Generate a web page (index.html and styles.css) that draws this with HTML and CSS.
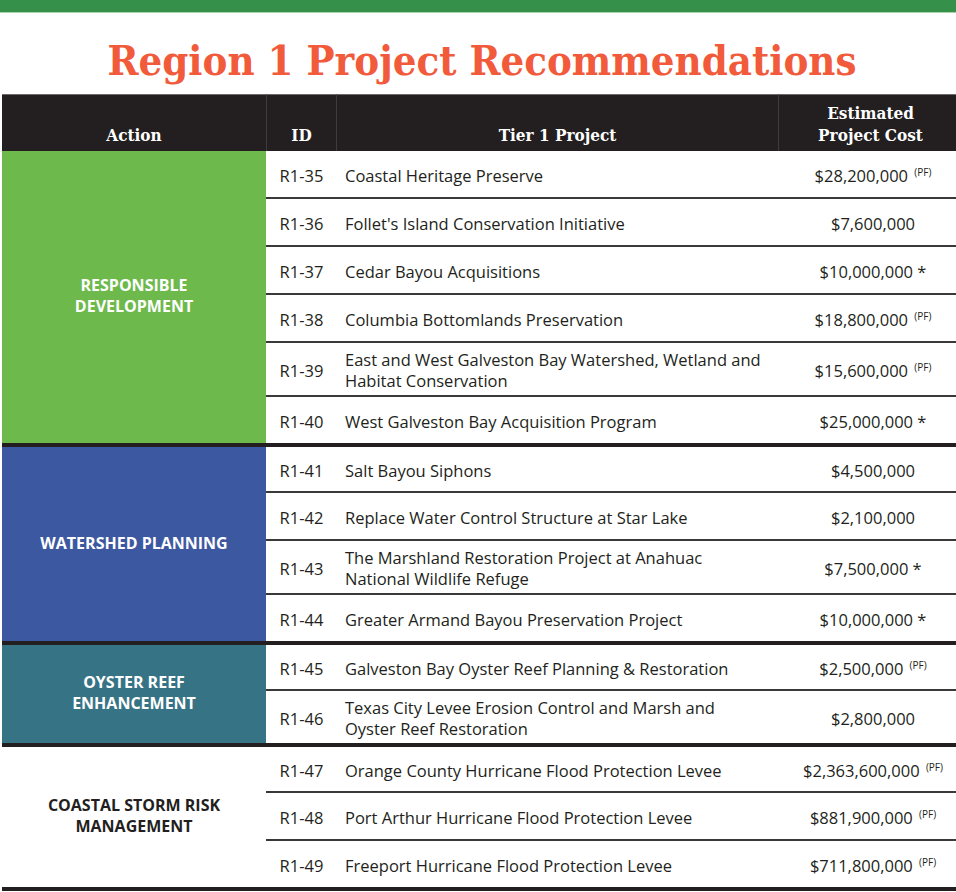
FILE: index.html
```html
<!DOCTYPE html>
<html lang="en">
<head>
<meta charset="utf-8">
<title>Region 1 Project Recommendations</title>
<link rel="stylesheet" href="styles.css">
</head>
<body>
<div class="topbar"></div>
<h1 class="title">Region 1 Project Recommendations</h1>
<table class="projects">
  <colgroup>
    <col class="c-action">
    <col class="c-id">
    <col class="c-proj">
    <col class="c-cost">
  </colgroup>
  <thead>
    <tr>
      <th>Action</th>
      <th>ID</th>
      <th>Tier 1 Project</th>
      <th>Estimated<br>Project Cost</th>
    </tr>
  </thead>
  <tbody class="g-first">
    <tr class="first">
      <td class="action green" rowspan="6">RESPONSIBLE<br>DEVELOPMENT</td>
      <td class="id">R1-35</td><td class="proj">Coastal Heritage Preserve</td><td class="cost">$28,200,000 <sup>(PF)</sup></td>
    </tr>
    <tr><td class="id">R1-36</td><td class="proj">Follet's Island Conservation Initiative</td><td class="cost">$7,600,000</td></tr>
    <tr><td class="id">R1-37</td><td class="proj">Cedar Bayou Acquisitions</td><td class="cost">$10,000,000 *</td></tr>
    <tr><td class="id">R1-38</td><td class="proj">Columbia Bottomlands Preservation</td><td class="cost">$18,800,000 <sup>(PF)</sup></td></tr>
    <tr class="double"><td class="id">R1-39</td><td class="proj">East and West Galveston Bay Watershed, Wetland and<br>Habitat Conservation</td><td class="cost">$15,600,000 <sup>(PF)</sup></td></tr>
    <tr><td class="id">R1-40</td><td class="proj">West Galveston Bay Acquisition Program</td><td class="cost">$25,000,000 *</td></tr>
  </tbody>
  <tbody class="group">
    <tr class="first">
      <td class="action blue" rowspan="4">WATERSHED PLANNING</td>
      <td class="id">R1-41</td><td class="proj">Salt Bayou Siphons</td><td class="cost">$4,500,000</td>
    </tr>
    <tr><td class="id">R1-42</td><td class="proj">Replace Water Control Structure at Star Lake</td><td class="cost">$2,100,000</td></tr>
    <tr class="double"><td class="id">R1-43</td><td class="proj">The Marshland Restoration Project at Anahuac<br>National Wildlife Refuge</td><td class="cost">$7,500,000 *</td></tr>
    <tr><td class="id">R1-44</td><td class="proj">Greater Armand Bayou Preservation Project</td><td class="cost">$10,000,000 *</td></tr>
  </tbody>
  <tbody class="group">
    <tr class="first">
      <td class="action teal" rowspan="2">OYSTER REEF<br>ENHANCEMENT</td>
      <td class="id">R1-45</td><td class="proj">Galveston Bay Oyster Reef Planning &amp; Restoration</td><td class="cost">$2,500,000 <sup>(PF)</sup></td>
    </tr>
    <tr class="double"><td class="id">R1-46</td><td class="proj">Texas City Levee Erosion Control and Marsh and<br>Oyster Reef Restoration</td><td class="cost">$2,800,000</td></tr>
  </tbody>
  <tbody class="group last">
    <tr class="first">
      <td class="action plain" rowspan="3">COASTAL STORM RISK<br>MANAGEMENT</td>
      <td class="id">R1-47</td><td class="proj">Orange County Hurricane Flood Protection Levee</td><td class="cost">$2,363,600,000 <sup>(PF)</sup></td>
    </tr>
    <tr><td class="id">R1-48</td><td class="proj">Port Arthur Hurricane Flood Protection Levee</td><td class="cost">$881,900,000 <sup>(PF)</sup></td></tr>
    <tr class="lastrow"><td class="id">R1-49</td><td class="proj">Freeport Hurricane Flood Protection Levee</td><td class="cost">$711,800,000 <sup>(PF)</sup></td></tr>
  </tbody>
</table>
</body>
</html>
```
FILE: styles.css
```css
html, body {
  margin: 0;
  padding: 0;
  background: #ffffff;
}
body {
  width: 956px;
  height: 892px;
  overflow: hidden;
  font-family: "Open Sans", "Noto Sans", sans-serif;
  color: #231f20;
}
.topbar {
  height: 12px;
  background: #35904a;
  border-bottom: 1px solid #a9d2a6;
}
.title {
  margin: 0;
  height: 81px;
  box-sizing: border-box;
  padding: 24px 0 0 8px;
  text-align: center;
  font-family: "DejaVu Serif", serif;
  font-stretch: condensed;
  font-weight: bold;
  font-size: 41.5px;
  line-height: 48px;
  color: #f15b3b;
  letter-spacing: 0;
}
.projects {
  margin-left: 2px;
  width: 954px;
  table-layout: fixed;
  border-collapse: separate;
  border-spacing: 0;
}
.c-action { width: 264px; }
.c-id { width: 70px; }
.c-proj { width: 442px; }
.c-cost { width: 178px; }

th {
  background: #231f20;
  color: #ffffff;
  font-family: "DejaVu Serif", serif;
  font-stretch: condensed;
  font-weight: bold;
  font-size: 17px;
  line-height: 22px;
  height: 57px;
  box-sizing: border-box;
  vertical-align: bottom;
  padding: 0 0 5px 0;
  border-top: 1px solid #6d6a6b;
  border-left: 1px solid #3f3b3c;
}
th:first-child { border-left: none; }
th:last-child { padding-left: 6px; }

td {
  padding: 2px 0 0 0;
  font-size: 16.5px;
  line-height: 21px;
  vertical-align: middle;
  height: 46px;
  box-sizing: border-box;
}
td.id {
  text-align: center;
  padding-left: 1px;
}
td.proj {
  padding-left: 9px;
}
td.cost {
  text-align: center;
  padding-left: 12px;
}
tbody tr + tr td {
  border-top: 2px solid #3b3839;
  height: 48px;
}
tbody tr.double td {
  height: 54px;
}
.group tr.first td {
  border-top: 4px solid #231f20;
  height: 48px;
}
.last tr.lastrow td,
.last td.action {
  border-bottom: 4px solid #231f20;
}
.last tr.lastrow td {
  height: 52px;
}
sup {
  font-size: 10px;
  line-height: 0;
  vertical-align: 6px;
  margin-left: 2px;
}
td.action {
  text-align: center;
  font-weight: bold;
  font-size: 16px;
  line-height: 21px;
  color: #ffffff;
  letter-spacing: 0;
  padding: 0 0 2px 0;
}
td.green { background: #6db94b; }
td.blue { background: #3c58a0; }
td.teal { background: #367385; }
td.plain { color: #231f20; background: #ffffff; }
```
